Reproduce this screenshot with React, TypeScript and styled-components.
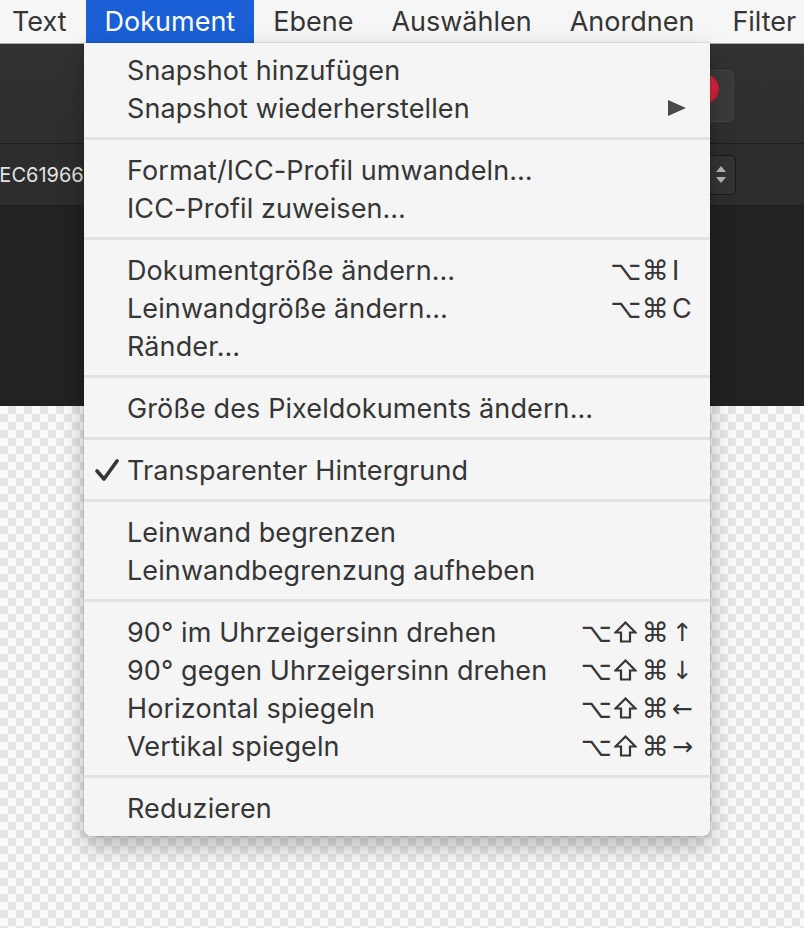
import styled, { createGlobalStyle } from 'styled-components';

const GlobalStyle = createGlobalStyle`
  html, body { margin: 0; padding: 0; }
  body {
    font-family: Inter, "Noto Sans", "Liberation Sans", sans-serif;
    overflow: hidden;
    -webkit-font-smoothing: antialiased;
  }
`;

const Screen = styled.div`
  position: relative;
  width: 804px;
  height: 928px;
  overflow: hidden;
  display: flex;
  flex-direction: column;
`;

// top system menu bar
const MenuBar = styled.div`
  flex: none;
  height: 43px;
  display: flex;
  align-items: stretch;
  margin-left: -7px;
  background: #f6f6f6;
  border-bottom: 1px solid #ababab;
`;

const MenuTitle = styled.div<{ $active?: boolean }>`
  padding: 0 19px;
  font-size: 27px;
  line-height: 43px;
  white-space: nowrap;
  color: ${p => (p.$active ? '#ffffff' : '#353535')};
  background: ${p => (p.$active ? '#1a5fd5' : 'transparent')};
`;

// app chrome behind the menu
const Toolbar = styled.div`
  flex: none;
  height: 100px;
  display: flex;
  justify-content: flex-end;
  align-items: flex-start;
  padding: 26px 70px 0 0;
  box-sizing: border-box;
  background: linear-gradient(#323232, #2e2e2e);
  border-bottom: 1px solid #1d1d1d;
`;

const ToolButton = styled.div`
  width: 70px;
  height: 52px;
  box-sizing: border-box;
  display: flex;
  align-items: flex-start;
  padding: 3px 0 0 24px;
  background: #3a3a3a;
  border: 1px solid #444;
  border-radius: 6px;
`;

const RedDot = styled.div`
  width: 30px;
  height: 30px;
  border-radius: 50%;
  background: radial-gradient(circle at 40% 40%, #f23a4e, #c0122a);
`;

const OptionsBar = styled.div`
  flex: none;
  height: 61px;
  display: flex;
  align-items: center;
  justify-content: space-between;
  padding-right: 68px;
  background: #2d2d2d;
  border-bottom: 1px solid #1e1e1e;
`;

const ProfileText = styled.div`
  margin-left: -6px;
  font-size: 20px;
  color: #e2e2e2;
  white-space: nowrap;
`;

const Stepper = styled.div`
  width: 36px;
  height: 40px;
  box-sizing: border-box;
  display: flex;
  flex-direction: column;
  align-items: center;
  justify-content: center;
  gap: 5px;
  padding-left: 6px;
  background: #343434;
  border: 1px solid #1a1a1a;
  border-radius: 5px;
`;

const Arrow = styled.div<{ $down?: boolean }>`
  width: 0;
  height: 0;
  border-left: 5px solid transparent;
  border-right: 5px solid transparent;
  ${p => (p.$down ? 'border-top: 6px solid #b8b8b8;' : 'border-bottom: 6px solid #b8b8b8;')}
`;

const DarkStage = styled.div`
  flex: none;
  height: 200px;
  background: #222222;
`;

const Checker = styled.div`
  flex: 1;
  background: repeating-conic-gradient(#e6e6e6 0 25%, #fbfbfb 0 50%) 0 0 / 16px 16px;
`;

// dropdown menu
const Menu = styled.div`
  position: absolute;
  top: 43px;
  left: 84px;
  width: 626px;
  box-sizing: border-box;
  padding: 8px 0 9px;
  background: #f5f5f5;
  border-radius: 0 0 7px 7px;
  box-shadow: 0 10px 24px rgba(0, 0, 0, 0.28), 0 0 0 1px rgba(0, 0, 0, 0.08);
`;

const Row = styled.div`
  height: 38px;
  display: grid;
  grid-template-columns: 43px 1fr auto 26px;
  align-items: center;
  padding-right: 14px;
  font-size: 27px;
  letter-spacing: 0.1px;
  color: #363636;
  white-space: nowrap;
`;

const CheckCell = styled.div`
  display: flex;
  justify-content: flex-end;
  padding-right: 8px;
`;

const Mods = styled.div`
  display: flex;
  align-items: center;
  justify-content: flex-end;
`;

const Glyph = styled.span`
  width: 29.5px;
  display: flex;
  justify-content: center;
  font-family: "DejaVu Sans", sans-serif;
  font-size: 27px;
  letter-spacing: 0;
`;

const KeyCell = styled.div`
  display: flex;
  align-items: center;
  padding-left: 2px;
`;

const Key = styled.span<{ $sym?: boolean }>`
  font-family: ${p => (p.$sym ? '"DejaVu Sans", sans-serif' : 'Inter, "Noto Sans", sans-serif')};
  font-size: ${p => (p.$sym ? '25px' : '27px')};
`;

const Separator = styled.div`
  height: 3px;
  margin: 10px 0 11px;
  background: #e3e3e3;
`;

type Item = { label: string; mods?: string; key?: string; check?: boolean; sub?: boolean };

const groups: Item[][] = [
  [
    { label: 'Snapshot hinzufügen' },
    { label: 'Snapshot wiederherstellen', sub: true },
  ],
  [{ label: 'Format/ICC-Profil umwandeln…' }, { label: 'ICC-Profil zuweisen…' }],
  [
    { label: 'Dokumentgröße ändern…', mods: '⌥⌘', key: 'I' },
    { label: 'Leinwandgröße ändern…', mods: '⌥⌘', key: 'C' },
    { label: 'Ränder…' },
  ],
  [{ label: 'Größe des Pixeldokuments ändern…' }],
  [{ label: 'Transparenter Hintergrund', check: true }],
  [{ label: 'Leinwand begrenzen' }, { label: 'Leinwandbegrenzung aufheben' }],
  [
    { label: '90° im Uhrzeigersinn drehen', mods: '⌥⇧⌘', key: '↑' },
    { label: '90° gegen Uhrzeigersinn drehen', mods: '⌥⇧⌘', key: '↓' },
    { label: 'Horizontal spiegeln', mods: '⌥⇧⌘', key: '←' },
    { label: 'Vertikal spiegeln', mods: '⌥⇧⌘', key: '→' },
  ],
  [{ label: 'Reduzieren' }],
];

const CheckMark = () => (
  <svg width="24" height="22" viewBox="0 0 24 22">
    <path d="M2 12 L9 20 L22 2" fill="none" stroke="#363636" strokeWidth="3.6" strokeLinecap="round" strokeLinejoin="round" />
  </svg>
);

const SubArrow = () => (
  <svg width="18" height="16" viewBox="0 0 18 16" style={{ marginLeft: -4 }}>
    <path d="M0 0 L18 8 L0 16 Z" fill="#4a4a4a" />
  </svg>
);

// shift key symbol, drawn since the installed fonts only have a thin one
const ShiftIcon = () => (
  <svg width="23" height="22" viewBox="0 0 23 22">
    <path d="M11.5 1.5 L21.5 11.5 L16 11.5 L16 20.5 L7 20.5 L7 11.5 L1.5 11.5 Z" fill="none" stroke="#363636" strokeWidth="2.2" strokeLinejoin="miter" />
  </svg>
);

const MenuRow = ({ item }: { item: Item }) => (
  <Row>
    <CheckCell>{item.check && <CheckMark />}</CheckCell>
    <span>{item.label}</span>
    <Mods>
      {item.mods && [...item.mods].map((m, i) => <Glyph key={i}>{m === '⇧' ? <ShiftIcon /> : m}</Glyph>)}
    </Mods>
    <KeyCell>
      {item.key && <Key $sym={item.key > '~'}>{item.key}</Key>}
      {item.sub && <SubArrow />}
    </KeyCell>
  </Row>
);

const titles = ['Text', 'Dokument', 'Ebene', 'Auswählen', 'Anordnen', 'Filter'];

export default function App() {
  return (
    <Screen>
      <GlobalStyle />
      <MenuBar>
        {titles.map(t => (
          <MenuTitle key={t} $active={t === 'Dokument'}>{t}</MenuTitle>
        ))}
      </MenuBar>
      <Toolbar>
        <ToolButton>
          <RedDot />
        </ToolButton>
      </Toolbar>
      <OptionsBar>
        <ProfileText>IEC61966-2.1</ProfileText>
        <Stepper>
          <Arrow />
          <Arrow $down />
        </Stepper>
      </OptionsBar>
      <DarkStage />
      <Checker />
      <Menu>
        {groups.map((g, gi) => (
          <div key={gi}>
            {gi > 0 && <Separator />}
            {g.map(item => (
              <MenuRow key={item.label} item={item} />
            ))}
          </div>
        ))}
      </Menu>
    </Screen>
  );
}
